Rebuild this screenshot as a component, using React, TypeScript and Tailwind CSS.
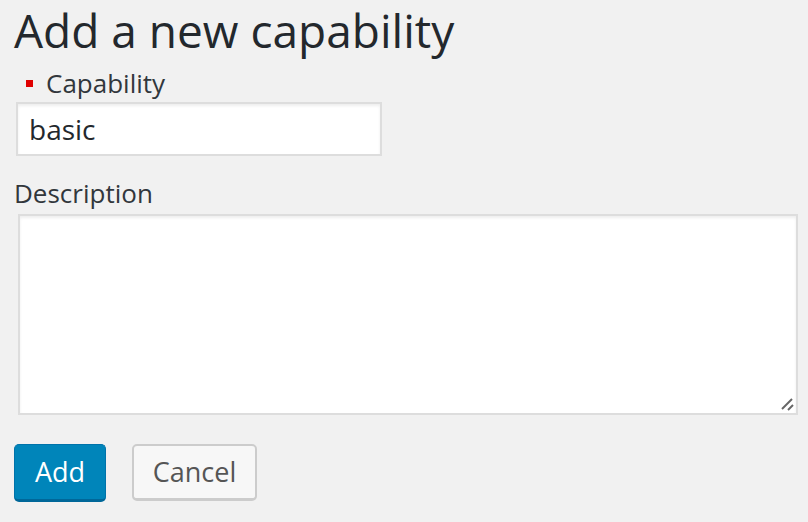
export default function App() {
  return (
    <div
      className="min-h-[522px] w-full bg-[#f1f1f1] pl-[14px] pt-[2px] text-[#23282d]"
      style={{ fontFamily: '"Open Sans", sans-serif' }}
    >
      <h1 className="text-[46px] font-normal leading-[56px]">Add a new capability</h1>
      <div className="mt-[8px] flex items-center">
        <span className="ml-[12px] mr-[13px] h-[7px] w-[7px] bg-[#e00000]" />
        <label className="text-[26px] leading-[34px] text-[#32373c]">Capability</label>
      </div>
      <input
        defaultValue="basic"
        className="mt-[2px] ml-[2px] block h-[54px] w-[366px] border-2 border-[#dddddd] bg-white px-[11px] text-[28px] text-[#23282d] shadow-[inset_0_2px_3px_rgba(0,0,0,0.07)] outline-none"
      />
      <label className="mt-[20px] block text-[26px] leading-[34px] text-[#32373c]">Description</label>
      <div className="relative mt-[4px] ml-[4px] h-[201px] w-[780px]">
        <textarea className="block h-full w-full resize-none border-2 border-[#dddddd] bg-white shadow-[inset_0_2px_3px_rgba(0,0,0,0.07)] outline-none" />
        <svg className="absolute bottom-[4px] right-[4px]" width="14" height="14" viewBox="0 0 14 14">
          <line x1="2" y1="12" x2="12" y2="2" stroke="#666" strokeWidth="2" />
          <line x1="8" y1="13" x2="13" y2="8" stroke="#666" strokeWidth="2" />
        </svg>
      </div>
      <div className="mt-[29px] flex gap-[26px]">
        <button className="h-[58px] w-[92px] rounded-[5px] border border-[#0073aa] border-b-[3px] border-b-[#006799] bg-[#0085ba] text-[27px] text-white">
          Add
        </button>
        <button className="h-[57px] w-[125px] rounded-[5px] border-2 border-[#cccccc] border-b-[3px] bg-[#f7f7f7] text-[27px] text-[#555555]">
          Cancel
        </button>
      </div>
    </div>
  );
}
